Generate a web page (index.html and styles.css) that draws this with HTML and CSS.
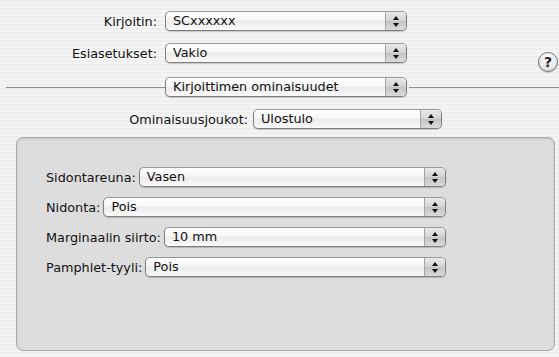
FILE: index.html
```html
<!DOCTYPE html>
<html lang="fi">

<head>
    <meta charset="UTF-8">
    <title>Tulosta</title>
    <link rel="stylesheet" href="styles.css">
</head>

<body>

    <!-- Printer and presets -->
    <div class="top">
        <div class="row">
            <span class="label wide">Kirjoitin:</span>
            <div class="popup main">
                <span class="value">SCxxxxxx</span>
                <span class="arrows"><i class="up"></i><i class="down"></i></span>
            </div>
        </div>

        <div class="row gap12">
            <span class="label wide">Esiasetukset:</span>
            <div class="popup main">
                <span class="value">Vakio</span>
                <span class="arrows"><i class="up"></i><i class="down"></i></span>
            </div>
            <button class="help">?</button>
        </div>

        <!-- Pane selector with separator line -->
        <div class="row sep-row">
            <span class="line left"></span>
            <div class="popup main">
                <span class="value">Kirjoittimen ominaisuudet</span>
                <span class="arrows"><i class="up"></i><i class="down"></i></span>
            </div>
            <span class="line right"></span>
        </div>

        <div class="row gap12">
            <span class="label sets">Ominaisuusjoukot:</span>
            <div class="popup sets-popup">
                <span class="value">Ulostulo</span>
                <span class="arrows"><i class="up"></i><i class="down"></i></span>
            </div>
        </div>
    </div>

    <!-- Feature panel -->
    <div class="panel">
        <div class="prow">
            <span class="label">Sidontareuna:</span>
            <div class="popup">
                <span class="value">Vasen</span>
                <span class="arrows"><i class="up"></i><i class="down"></i></span>
            </div>
        </div>
        <div class="prow">
            <span class="label">Nidonta:</span>
            <div class="popup">
                <span class="value">Pois</span>
                <span class="arrows"><i class="up"></i><i class="down"></i></span>
            </div>
        </div>
        <div class="prow">
            <span class="label">Marginaalin siirto:</span>
            <div class="popup">
                <span class="value">10 mm</span>
                <span class="arrows"><i class="up"></i><i class="down"></i></span>
            </div>
        </div>
        <div class="prow">
            <span class="label">Pamphlet-tyyli:</span>
            <div class="popup">
                <span class="value">Pois</span>
                <span class="arrows"><i class="up"></i><i class="down"></i></span>
            </div>
        </div>
    </div>

</body>

</html>
```

FILE: styles.css
```css
html,
body {
    margin: 0;
    width: 559px;
    height: 357px;
    overflow: hidden;
}

body {
    font-family: "DejaVu Sans", sans-serif;
    font-size: 12.8px;
    color: #111;
    background: repeating-linear-gradient(#eeeeee 0 2px, #f4f4f4 2px 4px);
}

.top {
    padding-top: 11px;
}

.row {
    display: flex;
    align-items: center;
    height: 20px;
}

.gap12 {
    margin-top: 12px;
}

.sep-row {
    margin-top: 14px;
}

.label {
    white-space: nowrap;
}

.label.wide {
    width: 157px;
    text-align: right;
    margin-right: 8px;
}

.label.sets {
    width: 248px;
    text-align: right;
    margin-right: 5px;
}

/* Aqua style popup button */
.popup {
    display: flex;
    height: 20px;
    box-sizing: border-box;
    border: 1px solid #7d7d7d;
    border-top-color: #9a9a9a;
    border-radius: 5px;
    background: linear-gradient(#ffffff, #f6f6f6 45%, #ebebeb 52%, #fafafa);
    box-shadow: 0 1px 1px rgba(0, 0, 0, 0.18);
}

.popup .value {
    flex: 1;
    padding-left: 7px;
    line-height: 18px;
    white-space: nowrap;
}

.popup .arrows {
    width: 20px;
    border-left: 1px solid #a4a4a4;
    border-radius: 0 4px 4px 0;
    background: linear-gradient(#e9e9e9, #d4d4d4 48%, #c4c4c4 52%, #dadada);
    display: flex;
    flex-direction: column;
    align-items: center;
    justify-content: center;
    gap: 3px;
}

.arrows i {
    display: block;
    width: 0;
    height: 0;
    border-left: 3px solid transparent;
    border-right: 3px solid transparent;
}

.arrows .up {
    border-bottom: 4px solid #111;
}

.arrows .down {
    border-top: 4px solid #111;
}

.main {
    width: 242px;
}

.sets-popup {
    width: 189px;
}

.line {
    height: 1px;
    background: #8e8e8e;
}

.line.left {
    margin-left: 6px;
    width: 159px;
}

.line.right {
    flex: 1;
    margin-left: 2px;
}

.help {
    width: 20px;
    height: 20px;
    margin: 9px 1px -9px auto;
    padding: 0;
    border: 1px solid #777;
    border-radius: 50%;
    background: radial-gradient(circle at 50% 30%, #ffffff, #e8e8e8 60%, #c6c6c6);
    font-family: "DejaVu Sans", sans-serif;
    font-size: 14px;
    font-weight: bold;
    line-height: 18px;
    color: #222;
    box-shadow: 0 1px 1px rgba(0, 0, 0, 0.2);
}

/* Grouped options box */
.panel {
    margin: 8px 0 0 16px;
    width: 539px;
    height: 214px;
    box-sizing: border-box;
    border: 1px solid #a9a9a9;
    border-radius: 7px;
    background: #dddddd;
    box-shadow: inset 0 1px 2px rgba(0, 0, 0, 0.12);
    padding: 29px 108px 0 29px;
    display: flex;
    flex-direction: column;
    gap: 10px;
}

.prow {
    display: flex;
    align-items: center;
    gap: 3px;
}

.prow .popup {
    flex: 1;
}
```
